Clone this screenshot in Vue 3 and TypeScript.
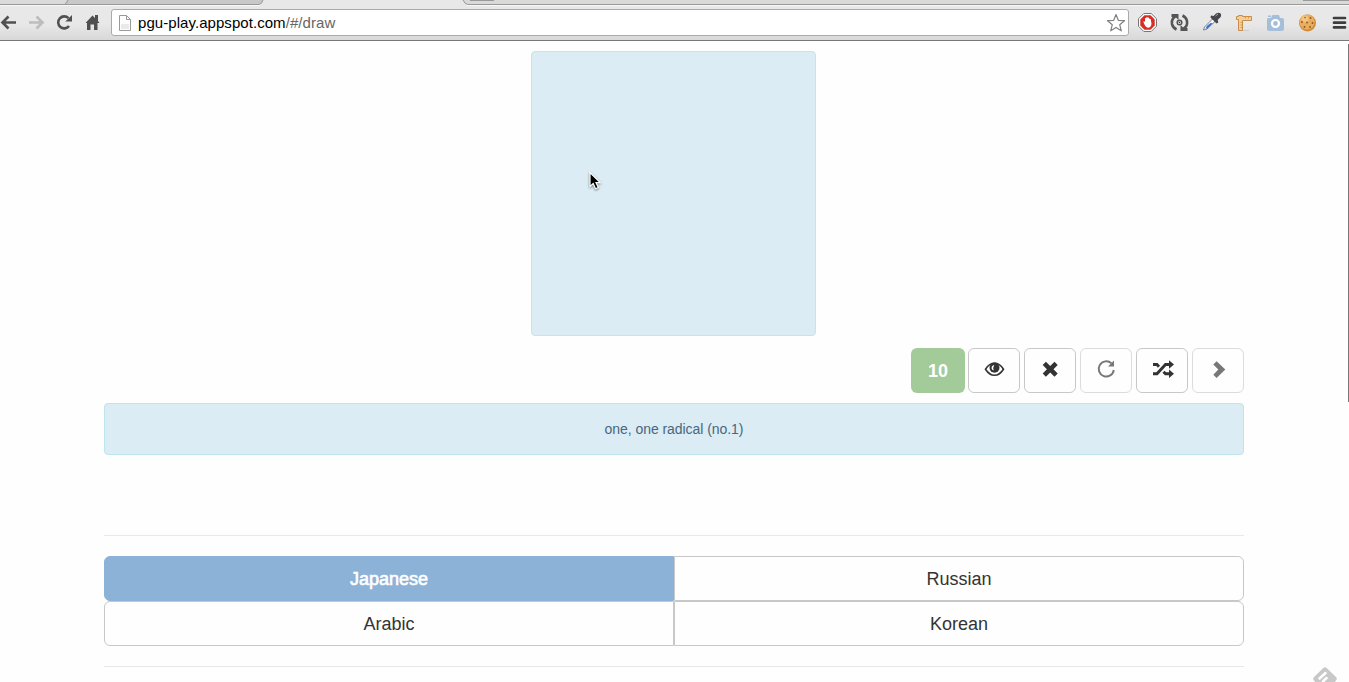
<script setup lang="ts">
interface Language {
  name: string
  active: boolean
}

const languages: Language[] = [
  { name: 'Japanese', active: true },
  { name: 'Russian', active: false },
  { name: 'Arabic', active: false },
  { name: 'Korean', active: false },
]
const remaining = 10
</script>

<template>
  <div class="window">
    <header class="chrome">
      <svg class="tabs" width="1349" height="6" viewBox="0 0 1349 6">
        <rect width="1349" height="6" fill="#e8e8e8" />
        <path d="M0 0H68L65 4H0Z" fill="#dadada" />
        <path d="M67 0H263Q262 4 259 4H65Z" fill="#c8c8c8" />
        <path d="M463 0Q465 4 468 4H1349V0Z" fill="#d9d9d8" />
        <path d="M0 4.5H259Q262 4 263 0M463 0Q465 4.5 468 4.5H1349M65 4Q67 3 68 0" fill="none" stroke="#999" />
        <path d="M0 5.5H260M467 5.5H1349" stroke="#f8f8f8" />
        <path d="M470 0H494" stroke="#999" stroke-width="2" />
        <path d="M1303 .5H1349" stroke="#999" />
      </svg>
      <div class="toolbar">
        <svg class="nav" width="111" height="34" viewBox="0 6 111 34">
          <path d="M16 22.5H3M8.5 16.5L2.5 22.5L8.5 28.5" fill="none" stroke="#505050" stroke-width="2.7" />
          <path d="M29 22.5H42M36.500 16.500L42.500 22.500L36.500 28.500" fill="none" stroke="#bdbdbd" stroke-width="2.7" />
          <path d="M69 26A6 6 0 1 1 68.500 18.200" fill="none" stroke="#505050" stroke-width="2.600" />
          <path d="M72 15V21.500H65.300Z" fill="#505050" />
          <path d="M85.500 23L92.500 15.500L95 18V15H98V21L99.500 23H97.500V30H94V24.500H90.500V30H87V23Z" fill="#505050" />
        </svg>
        <div class="omnibox">
          <svg class="page-icon" width="12" height="16" viewBox="0 0 12 16">
            <path d="M.5 .5H7.500L11.500 4.500V15.500H.5Z" fill="#fdfdfd" stroke="#999" />
            <path d="M7.500 .5V4.500H11.500" fill="none" stroke="#999" />
            <path d="M2 9H10V14H2Z" fill="#e9e9e9" />
          </svg>
          <div class="url">pgu-play.appspot.com<span>/#/draw</span></div>
          <svg class="star" width="20" height="20" viewBox="0 0 20 20">
            <path d="M10 1.500L12.300 7.300L18.500 7.700L13.700 11.700L15.300 17.800L10 14.400L4.700 17.800L6.300 11.700L1.500 7.700L7.700 7.300Z" fill="#fff" stroke="#808080" stroke-width="1.200" stroke-linejoin="round" />
          </svg>
        </div>
        <svg class="extensions" width="220" height="34" viewBox="1129 6 220 34">
          <path d="M1143.800 13.500H1151.200L1156.500 18.800V26.200L1151.200 31.500H1143.800L1138.500 26.200V18.800Z" fill="#fff" stroke="#777" />
          <path d="M1144.400 15.300H1150.600L1154.700 19.400V25.600L1150.600 29.700H1144.400L1140.300 25.600V19.400Z" fill="#d92c23" />
          <path d="M1143.300 21.500Q1144.500 21 1145 22V18.300Q1145.700 17.500 1146.300 18.300V17.300Q1147 16.500 1147.700 17.300V18Q1148.500 17.200 1149.200 18V19Q1150.200 18.300 1150.800 19.200L1151.500 24Q1151 27.500 1148 27.800Q1145 27.500 1143.300 21.500Z" fill="#fff" />
          <g fill="none" stroke="#555" stroke-width="2.600">
            <path d="M1177 15.500Q1171 18 1172 24Q1172.700 27.500 1176.500 29.500" />
            <path d="M1182 29.500Q1188 27 1187 21Q1186.300 17.500 1182.500 15.500" />
            <circle cx="1179.500" cy="22.500" r="2.300" stroke-width="1.500" />
          </g>
          <path d="M1171.500 14H1178.500V20L1175.500 17H1171.500ZM1187.500 31H1180.500V25L1183.500 28H1187.500Z" fill="#555" />
          <circle cx="1179.500" cy="22.500" r=".8" fill="#333" />
          <path d="M1203.500 30L1204.500 27L1213 18.500L1215.500 21L1207 29Z" fill="#f8fbff" stroke="#78828c" />
          <path d="M1205.500 28.500L1207 25.800L1211 22.800L1212.500 23.500L1207.500 28.400Z" fill="#3f70d2" />
          <path d="M1211 15.500L1213.500 16L1216 13.500Q1219 12 1221 14Q1221.500 17 1219 18.500L1217.700 20L1218.300 22.500L1216.500 23.500L1210.500 17.500Z" fill="#45484c" />
          <path d="M1215.500 16L1218 14" stroke="#aaa" />
          <path d="M1238 30.500H1249" stroke="#ccc" />
          <path d="M1236.500 16.500H1238.500V15.500H1242.500V16.500H1251.500V20.500H1242.500V30.500H1238.500V19.500H1236.500Z" fill="#f5cf97" stroke="#c98d4b" />
          <path d="M1240.500 22.500H1242M1240.500 25H1242M1240.500 27.500H1242M1245.500 17V18.500M1248.500 17V18.500" stroke="#c98d4b" stroke-width=".8" />
          <path d="M1268 18H1271L1272.500 15H1279L1280 18H1282Q1284 18 1284 20V29Q1284 31 1282 31H1269Q1267 31 1267 29V20Q1267 18 1268 18Z" fill="#a5bfda" />
          <path d="M1268 15.500H1271V17H1268Z" fill="#a5bfda" />
          <circle cx="1275.500" cy="23.500" r="3.500" fill="#a5bfda" stroke="#fff" stroke-width="2.200" />
          <circle cx="1307.500" cy="23" r="8.500" fill="#d48b38" />
          <circle cx="1307" cy="22" r="7.600" fill="#e9ad5e" />
          <circle cx="1305" cy="19" r="3.500" fill="#f2c47f" />
          <g fill="#8b5725"><circle cx="1302" cy="22" r=".9" /><circle cx="1305" cy="17.500" r=".8" /><circle cx="1310.500" cy="18" r=".9" /><circle cx="1307" cy="22.500" r=".9" /><circle cx="1312.500" cy="23" r=".9" /><circle cx="1304.500" cy="27" r=".9" /><circle cx="1310" cy="27" r=".9" /></g>
          <path d="M1334 18H1345M1334 22.700H1345M1334 27.400H1345" stroke="#3d3d3d" stroke-width="2.700" stroke-linecap="round" />
        </svg>
      </div>
    </header>

    <main class="container">
      <div class="canvas">
        <svg class="cursor" width="17" height="22" viewBox="0 0 17 22">
          <path d="M3 2.500V16.500L6.200 13.600L8.500 18.700L11.300 17.500L9 12.700H13.200Z" fill="#000" stroke="#fff" stroke-width="1.200" />
        </svg>
      </div>

      <div class="actions">
        <div class="count">{{ remaining }}</div>
        <button class="action" aria-label="Show">
          <svg width="52" height="45" viewBox="0 0 52 45">
            <path d="M17.500 21.200Q21.500 15 26.500 15Q31.500 15 35.500 21.200Q31.500 27.300 26.500 27.300Q21.500 27.300 17.500 21.200Z" fill="#fff" stroke="#333" stroke-width="1.600" />
            <circle cx="26.500" cy="19.800" r="5" fill="#333" />
            <path d="M26.300 17Q23.300 17.500 23.600 20.500Q23.800 22.200 25.800 22.400Q24.600 19.500 26.300 17Z" fill="#fff" />
          </svg>
        </button>
        <button class="action" aria-label="Clear">
          <svg width="52" height="45" viewBox="0 0 52 45">
            <path d="M18.700 17L21.900 13.800L26.200 18.100L30.500 13.800L33.700 17L29.500 21.200L33.700 25.500L30.500 28.700L26.200 24.400L21.900 28.700L18.700 25.500L22.900 21.200Z" fill="#333" />
          </svg>
        </button>
        <button class="action disabled" aria-label="Replay">
          <svg width="52" height="45" viewBox="0 0 52 45">
            <path d="M31.500 15.400A7.600 7.600 0 1 0 33.800 22" fill="none" stroke="#777" stroke-width="1.900" />
            <path d="M34 12.500V18.500H28Z" fill="#777" />
          </svg>
        </button>
        <button class="action" aria-label="Shuffle">
          <svg width="52" height="45" viewBox="0 0 52 45">
            <path d="M17 25.800H21L29.500 16.500H33M17 16.500H21L23 18.700M27.500 23.700L29.500 25.800H33" fill="none" stroke="#333" stroke-width="2.900" />
            <path d="M33 12.300L38 16.500L33 20.700ZM33 21.500L38 25.700L33 29.900Z" fill="#333" />
          </svg>
        </button>
        <button class="action disabled" aria-label="Next">
          <svg width="52" height="45" viewBox="0 0 52 45">
            <path d="M21.300 16.500L24.600 13.200L33.300 21.500L24.600 30L21.300 26.700L26.300 21.500Z" fill="#777" />
          </svg>
        </button>
      </div>

      <div class="hint">one, one radical (no.1)</div>
      <hr class="divider first">
      <div class="languages">
        <button v-for="language in languages" :key="language.name" class="language" :class="{ active: language.active }">{{ language.name }}</button>
      </div>
      <hr class="divider">
    </main>

    <div class="scrollbar" />
    <svg class="feedly" width="26" height="16" viewBox="0 0 26 16">
      <path d="M11.300 2Q13 .5 14.700 2L24 11Q25.500 12.700 24 14.500L22 17H4L2 14.500Q.5 12.700 2 11Z" fill="#c8c8c8" />
      <path d="M7.500 12.500L13.500 7M11 15.500L14.500 12" stroke="#fff" stroke-width="2.500" stroke-linecap="round" />
    </svg>
  </div>
</template>

<style>
body { margin: 0; overflow: hidden; background: #fefefe; }
</style>

<style scoped>
.window { position: relative; width: 1349px; height: 682px; overflow: hidden; background: #fefefe; color: #333; font-family: "Liberation Sans", Arial, sans-serif; }
.chrome { height: 41px; box-sizing: border-box; border-bottom: 1px solid #777; background: linear-gradient(#e8e8e8 0 24px, #d8d8d8 40px); }
.tabs { display: block; }
.toolbar { display: flex; height: 34px; }
.nav, .extensions { flex: none; }
.omnibox { display: flex; align-items: center; box-sizing: border-box; width: 1018px; height: 27px; margin-top: 3px; padding: 0 2px 0 7px; border: 1px solid #aaa; border-radius: 3px; background: #fff; }
.url { flex: 1; margin-left: 7px; color: #000; font-size: 15px; line-height: 20px; letter-spacing: .06px; white-space: pre; }
.url span { color: #666; }
.container { width: 1140px; margin: 10px 0 0 104px; }
.canvas { position: relative; box-sizing: border-box; width: 285px; height: 285px; margin-left: 427px; border: 1px solid #c5e5ec; border-radius: 4px; background: #dbecf4; }
.cursor { position: absolute; left: 55px; top: 118px; filter: drop-shadow(0 1px 1px #0007); }
.actions { display: flex; justify-content: flex-end; gap: 4px; margin-top: 12px; }
.count { width: 54px; height: 45px; margin-right: -1px; border-radius: 6px; background: #a2cb99; color: #fff; font-size: 18px; font-weight: bold; line-height: 46px; text-align: center; }
.action { box-sizing: border-box; width: 52px; height: 45px; padding: 0; border: 1px solid #c8c8c8; border-radius: 6px; background: #fefefe; }
.action svg { display: block; margin: -1px; }
.action.disabled { border-color: #dcdcdc; }
.hint { box-sizing: border-box; height: 52px; margin-top: 10px; border: 1px solid #bde5ec; border-radius: 4px; background: #dbecf4; color: #48677f; font-size: 14px; line-height: 50px; letter-spacing: -.05px; text-align: center; }
.divider { height: 1px; margin: 20px 0 0; border: 0; background: #e8e8e8; }
.divider.first { margin-top: 80px; }
.languages { display: grid; grid-template-columns: 570px 570px; margin-top: 20px; }
.language { box-sizing: border-box; height: 45px; padding: 2px 0 0; border: 1px solid #c8c8c8; background: #fefefe; color: #333; font: 18px/41px "Liberation Sans", Arial, sans-serif; }
.language:nth-child(odd) { border-radius: 6px 0 0 6px; }
.language:nth-child(even) { border-radius: 0 6px 6px 0; }
.language.active { border-color: #8db2d7; background: #8db2d7; color: #fff; -webkit-text-stroke: .6px #fff; }
.scrollbar { position: absolute; top: 44px; right: 0; width: 1px; height: 358px; background: #777; }
.feedly { position: absolute; left: 1312px; top: 666px; }
</style>
